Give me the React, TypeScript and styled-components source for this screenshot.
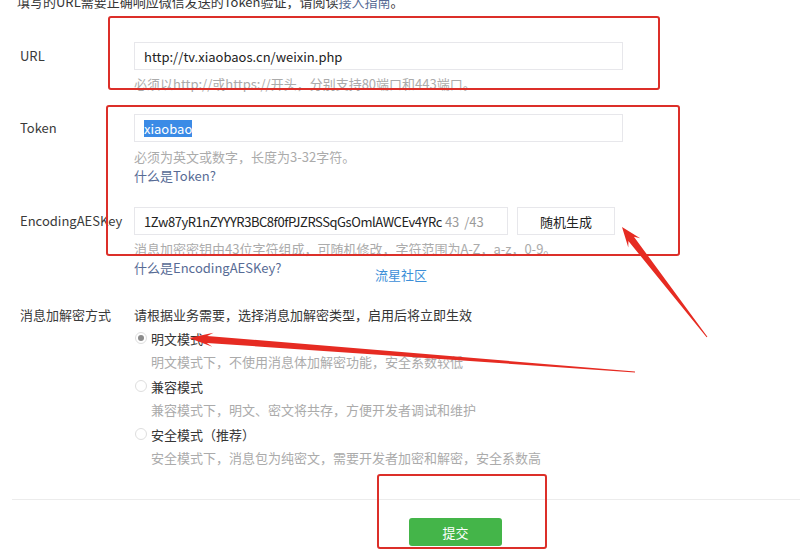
import React from "react";
import styled, { createGlobalStyle } from "styled-components";

const GlobalStyle = createGlobalStyle`
  html, body { margin: 0; padding: 0; background: #fff; }
  body {
    font-family: "Noto Sans CJK SC", "Noto Sans", sans-serif;
    font-size: 13px;
    color: #353535;
    overflow: hidden;
  }
  * { box-sizing: border-box; }
`;

const Page = styled.div`
  position: relative;
  width: 800px;
  height: 551px;
  overflow: hidden;
`;

const TopNote = styled.div`
  margin-top: -8px;
  padding-left: 17px;
  line-height: 20px;
  color: #353535;
  white-space: nowrap;
`;

const Blue = styled.span`
  color: #576b95;
`;

const Form = styled.div`
  padding-left: 20px;
`;

const Row = styled.div<{ $top: number }>`
  position: relative;
  display: flex;
  margin-top: ${(p) => p.$top}px;
`;

const Label = styled.div<{ $lh?: number }>`
  width: 114px;
  flex: none;
  line-height: ${(p) => p.$lh ?? 28}px;
  color: #3a3a3a;
  white-space: nowrap;
`;

const Field = styled.div`
  display: flex;
  flex-direction: column;
`;

const InputLine = styled.div`
  display: flex;
  gap: 9px;
`;

const InputBox = styled.div<{ $w: number }>`
  width: ${(p) => p.$w}px;
  height: 28px;
  border: 1px solid #e7e7eb;
  padding: 0 9px;
  display: flex;
  align-items: center;
  color: #222;
  white-space: nowrap;
  overflow: hidden;
`;

const KeyText = styled.span`
  letter-spacing: -0.45px;
`;

const Selected = styled.span`
  background: #3b8be6;
  color: #fff;
  line-height: 17px;
`;

const Counter = styled.span`
  color: #9a9a9a;
  margin-left: 3px;
  word-spacing: 2px;
`;

const GhostButton = styled.div`
  width: 98px;
  height: 28px;
  border: 1px solid #e7e7eb;
  display: flex;
  align-items: center;
  justify-content: center;
  color: #222;
`;

const Hint = styled.div<{ $top?: number }>`
  margin-top: ${(p) => p.$top ?? 0}px;
  line-height: 19px;
  color: #ababab;
  white-space: nowrap;
`;

const Link = styled.div`
  line-height: 19px;
  color: #576b95;
`;

const Watermark = styled.div`
  position: absolute;
  left: 355px;
  top: 58px;
  color: #3d8fd8;
  line-height: 20px;
`;

const Options = styled.div`
  display: flex;
  flex-direction: column;
  margin-top: 1px;
`;

const Intro = styled.div`
  line-height: 20px;
  color: #353535;
`;

const OptionLine = styled.div`
  display: flex;
  align-items: center;
  height: 24px;
  color: #353535;
`;

const RadioCircle = styled.span<{ $on?: boolean }>`
  width: 12px;
  height: 12px;
  border-radius: 50%;
  border: 1px solid #dedede;
  margin-left: 1px;
  margin-right: 4px;
  display: flex;
  align-items: center;
  justify-content: center;
  &::after {
    content: "";
    display: ${(p) => (p.$on ? "block" : "none")};
    width: 6px;
    height: 6px;
    border-radius: 50%;
    background: #8c8c8c;
  }
`;

const OptionDesc = styled.div`
  height: 24px;
  line-height: 24px;
  padding-left: 17px;
  color: #ababab;
  white-space: nowrap;
`;

const Divider = styled.div`
  margin: 29px 0 0 12px;
  border-top: 1px solid #ececec;
`;

const Footer = styled.div`
  margin-top: 18px;
  padding-left: 409px;
`;

const Submit = styled.div`
  width: 93px;
  height: 28px;
  border-radius: 3px;
  background: #44b549;
  color: #fff;
  display: flex;
  align-items: center;
  justify-content: center;
`;

const RedBox = styled.div<{ $x: number; $y: number; $w: number; $h: number }>`
  position: absolute;
  left: ${(p) => p.$x}px;
  top: ${(p) => p.$y}px;
  width: ${(p) => p.$w}px;
  height: ${(p) => p.$h}px;
  border: 2px solid #dc2f29;
  border-radius: 3px;
  pointer-events: none;
`;

const Overlay = styled.svg`
  position: absolute;
  left: 0;
  top: 0;
  pointer-events: none;
`;

type P = [number, number];

function arrowPoints(
  tip: P,
  tail: P,
  headLen: number,
  headW: number,
  neckW: number,
  tailW: number
): string {
  const dx = tail[0] - tip[0];
  const dy = tail[1] - tip[1];
  const len = Math.hypot(dx, dy);
  const ux = dx / len;
  const uy = dy / len;
  const nx = -uy;
  const ny = ux;
  const at = (d: number, w: number): P => [tip[0] + ux * d + nx * w, tip[1] + uy * d + ny * w];
  const pts: P[] = [
    tip,
    at(headLen, headW / 2),
    at(headLen * 0.75, neckW / 2),
    at(len, tailW / 2),
    at(len, -tailW / 2),
    at(headLen * 0.75, -neckW / 2),
    at(headLen, -headW / 2),
  ];
  return pts.map((p) => `${p[0].toFixed(1)},${p[1].toFixed(1)}`).join(" ");
}

const options = [
  { name: "明文模式", desc: "明文模式下，不使用消息体加解密功能，安全系数较低", on: true },
  { name: "兼容模式", desc: "兼容模式下，明文、密文将共存，方便开发者调试和维护", on: false },
  { name: "安全模式（推荐）", desc: "安全模式下，消息包为纯密文，需要开发者加密和解密，安全系数高", on: false },
];

export default function App() {
  return (
    <Page>
      <GlobalStyle />
      <TopNote>
        填写的URL需要正确响应微信发送的Token验证，请阅读<Blue>接入指南</Blue>。
      </TopNote>
      <Form>
        <Row $top={30}>
          <Label>URL</Label>
          <Field>
            <InputBox $w={489}>http://tv.xiaobaos.cn/weixin.php</InputBox>
            <Hint $top={4}>必须以http://或https://开头，分别支持80端口和443端口。</Hint>
          </Field>
        </Row>
        <Row $top={21}>
          <Label>Token</Label>
          <Field>
            <InputBox $w={489}>
              <Selected>xiaobao</Selected>
            </InputBox>
            <Hint $top={5}>必须为英文或数字，长度为3-32字符。</Hint>
            <Link>什么是Token?</Link>
          </Field>
        </Row>
        <Row $top={22}>
          <Label>EncodingAESKey</Label>
          <Field>
            <InputLine>
              <InputBox $w={374}>
                <KeyText>1Zw87yR1nZYYYR3BC8f0fPJZRSSqGsOmlAWCEv4YRc</KeyText>
                <Counter>43 /43</Counter>
              </InputBox>
              <GhostButton>随机生成</GhostButton>
            </InputLine>
            <Hint $top={4}>消息加密密钥由43位字符组成，可随机修改，字符范围为A-Z，a-z，0-9。</Hint>
            <Link>什么是EncodingAESKey?</Link>
          </Field>
          <Watermark>流星社区</Watermark>
        </Row>
        <Row $top={28}>
          <Label $lh={20}>消息加解密方式</Label>
          <Field>
            <Intro>请根据业务需要，选择消息加解密类型，启用后将立即生效</Intro>
            <Options>
              {options.map((o) => (
                <React.Fragment key={o.name}>
                  <OptionLine>
                    <RadioCircle $on={o.on} />
                    {o.name}
                  </OptionLine>
                  <OptionDesc>{o.desc}</OptionDesc>
                </React.Fragment>
              ))}
            </Options>
          </Field>
        </Row>
      </Form>
      <Divider />
      <Footer>
        <Submit>提交</Submit>
      </Footer>

      <RedBox $x={108} $y={16} $w={552} $h={74} />
      <RedBox $x={106} $y={105} $w={574} $h={151} />
      <RedBox $x={377} $y={474} $w={170} $h={75} />
      <Overlay width={800} height={551} viewBox="0 0 800 551">
        <polygon fill="#e62b22" points={arrowPoints([622, 227], [707, 337], 20, 15, 7, 1)} />
        <polygon fill="#e62b22" points={arrowPoints([189, 338], [635, 372], 24, 14, 7, 1)} />
      </Overlay>
    </Page>
  );
}
